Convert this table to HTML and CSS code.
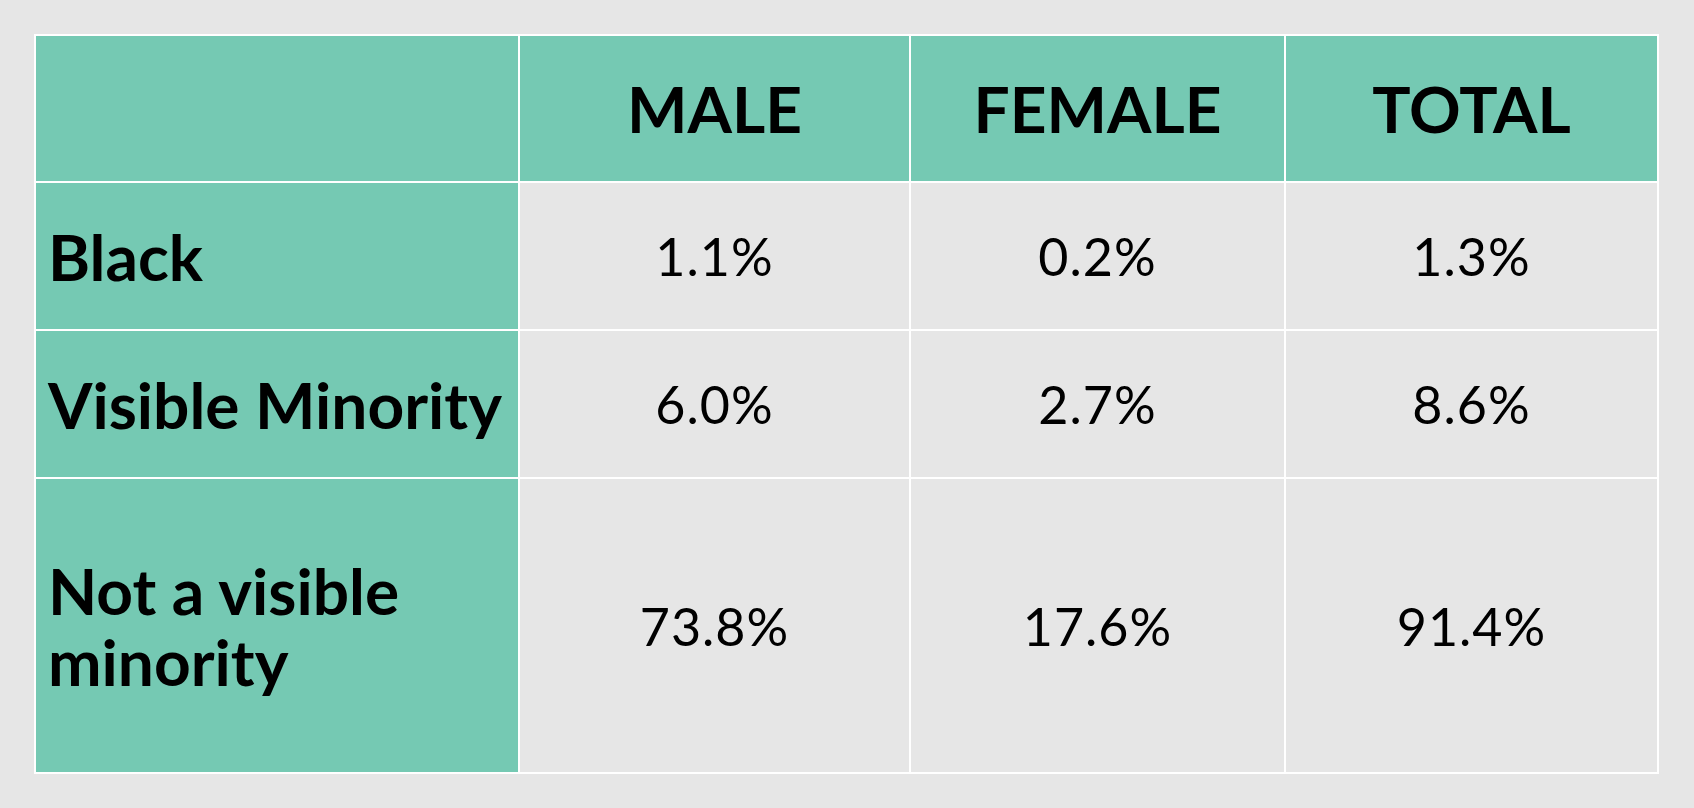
FILE: index.html
```html
<!DOCTYPE html>
<html lang="en">
<head>
<meta charset="utf-8">
<title>Visible minority table</title>
<link rel="stylesheet" href="styles.css">
</head>
<body>
<div class="table">
  <div class="cell head"></div>
  <div class="cell head center">MALE</div>
  <div class="cell head center">FEMALE</div>
  <div class="cell head center">TOTAL</div>

  <div class="cell label">Black</div>
  <div class="cell data">1.1%</div>
  <div class="cell data">0.2%</div>
  <div class="cell data">1.3%</div>

  <div class="cell label nowrap">Visible Minority</div>
  <div class="cell data">6.0%</div>
  <div class="cell data">2.7%</div>
  <div class="cell data">8.6%</div>

  <div class="cell label">Not a visible minority</div>
  <div class="cell data">73.8%</div>
  <div class="cell data">17.6%</div>
  <div class="cell data">91.4%</div>
</div>
</body>
</html>
```
FILE: styles.css
```css
html, body {
  margin: 0;
  padding: 0;
  background: #e6e6e6;
  width: 1694px;
  height: 808px;
  overflow: hidden;
}
body {
  font-family: Lato, "Noto Sans", "Liberation Sans", sans-serif;
  color: #000;
}
.table {
  margin: 34px 0 0 34px;
  width: max-content;
  display: grid;
  grid-template-columns: 482px 389px 373px 371px;
  grid-template-rows: 145px 146px 146px 293px;
  gap: 2px;
  padding: 2px;
  background: #ffffff;
}
.cell {
  display: flex;
  align-items: center;
  background: #e6e6e6;
}
.head {
  background: #75c9b3;
  font-weight: 700;
  font-size: 64px;
}
.center {
  justify-content: center;
}
.label {
  background: #75c9b3;
  font-weight: 700;
  font-size: 64px;
  line-height: 71px;
  padding: 0 20px 0 12px;
}
.nowrap {
  white-space: nowrap;
  padding-right: 0;
  overflow: hidden;
}
.data {
  justify-content: center;
  font-size: 52px;
  font-weight: 400;
  letter-spacing: 1px;
}
```
